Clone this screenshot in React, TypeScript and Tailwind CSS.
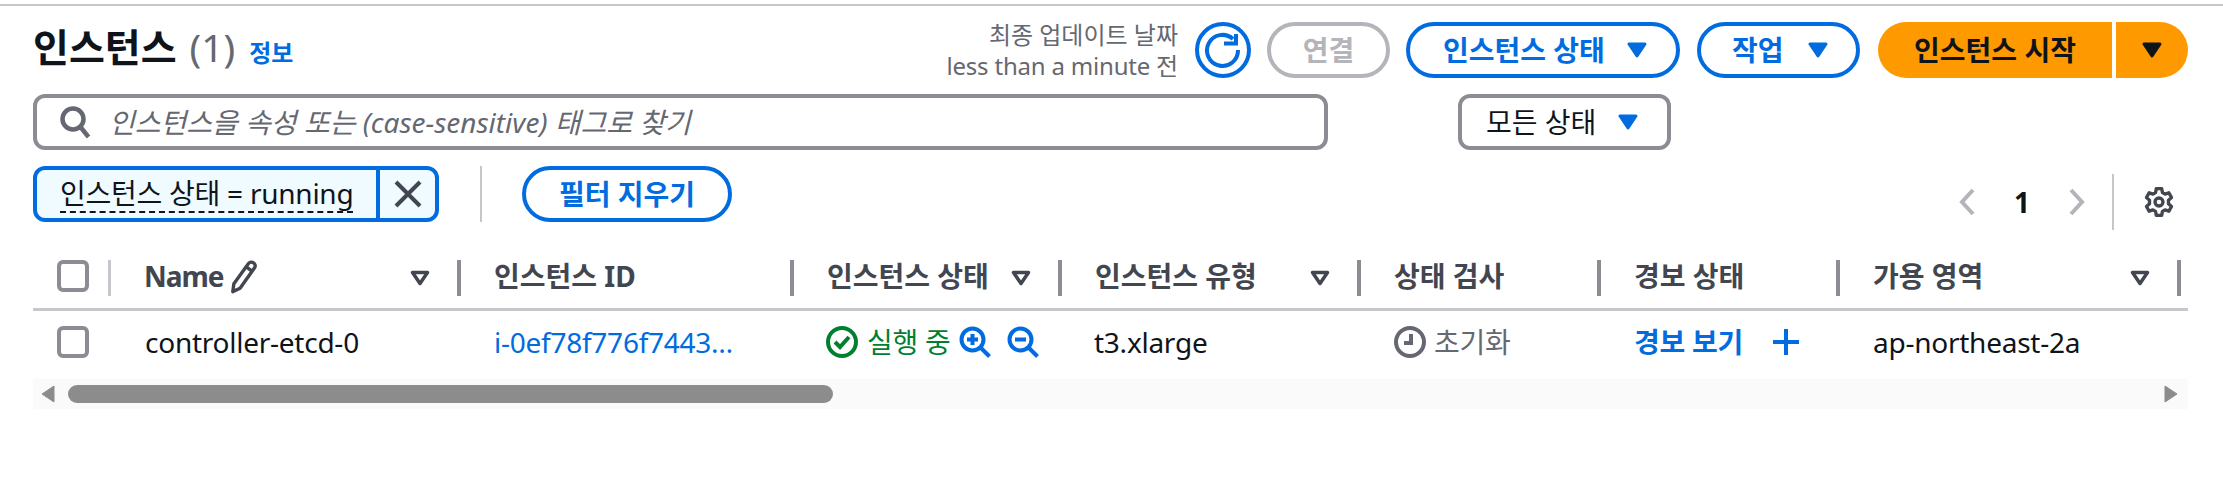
import type { ReactNode } from 'react';

const columns = 'grid grid-cols-[78px_350px_333px_268px_299px_240px_239px_341px_7px]';

function Caret({ color = 'fill-[#006ce0] stroke-[#006ce0]' }: { color?: string }) {
  return (
    <svg width="20" height="16" viewBox="0 0 20 16" className={`shrink-0 ${color}`}>
      <path d="M2 2h16l-8 12z" strokeWidth="3" strokeLinejoin="round" />
    </svg>
  );
}

function SortIcon() {
  return (
    <svg width="20" height="16" viewBox="0 0 20 16" fill="none" stroke="#424650" strokeWidth="3.5" strokeLinejoin="round" className="shrink-0">
      <path d="M2.5 2.5h15L10 13.5z" />
    </svg>
  );
}

function Checkbox() {
  return <div className="w-[32px] h-[32px] rounded-[6px] border-[4px] border-[#8c8c94] bg-white" />;
}

function HeaderCell({ label, sort, pencil }: { label?: string; sort?: boolean; pencil?: boolean }) {
  return (
    <div className="flex items-center h-[36px] pl-[33px]">
      <span className={`mb-[4px] text-[28px] font-bold text-[#424650] whitespace-nowrap ${pencil ? 'tracking-[-1px]' : ''}`}>{label}</span>
      {pencil && (
        <svg width="32" height="36" viewBox="0 0 28 32" fill="none" stroke="#424650" strokeWidth="3" strokeLinejoin="round" className="ml-[4px] mb-[2px]">
          <path d="M5 22 18 4c1-1.400 3-1.600 4.500-.6s1.900 3 .9 4.400L10.500 26 4 29z" />
          <path d="m16 7 6 4.500" />
        </svg>
      )}
      <div className="ml-auto flex items-center">
        {sort && <SortIcon />}
        <div className="ml-[27px] h-[36px] w-[4px] bg-[#8c8c94]" />
      </div>
    </div>
  );
}

function ZoomIcon({ minus }: { minus?: boolean }) {
  return (
    <svg width="32" height="32" viewBox="0 0 32 32" fill="none" stroke="#006ce0" className="shrink-0">
      <circle cx="13.500" cy="13.500" r="11" strokeWidth="4" />
      <path d="m21.500 21.500 9 9" strokeWidth="4" />
      <path d={minus ? 'M8 13.500h11' : 'M8 13.500h11M13.500 8v11'} strokeWidth="4" />
    </svg>
  );
}

function Pill({ children, className }: { children: ReactNode; className: string }) {
  return (
    <button className={`flex items-center h-[56px] rounded-[28px] border-[4px] bg-white text-[28px] font-bold whitespace-nowrap ${className}`}>
      {children}
    </button>
  );
}

export default function App() {
  return (
    <div className="w-[2223px] h-[482px] bg-white overflow-hidden text-[#0f141a] font-['Noto_Sans','Noto_Sans_CJK_KR',sans-serif]">
      <div className="mt-[4px] h-[2px] bg-[#c6c6cd]" />

      <div className="pl-[33px] pr-[35px] pt-[16px]">
        {/* Header */}
        <div className="flex items-center justify-between h-[56px]">
          <div className="flex items-baseline pb-[6px]">
            <h1 className="text-[39px] font-bold">인스턴스</h1>
            <span className="ml-[13px] text-[39px] text-[#656871]">(1)</span>
            <a className="ml-[14px] text-[24px] font-bold text-[#006ce0]">정보</a>
          </div>
          <div className="flex items-center">
            <div className="text-right text-[24px] leading-[31px] text-[#656871]">
              <div>최종 업데이트 날짜</div>
              <div className="tracking-[-0.2px]">less than a minute 전</div>
            </div>
            <svg width="56" height="56" viewBox="0 0 56 56" fill="none" stroke="#006ce0" className="ml-[17px]">
              <circle cx="28" cy="28" r="26" strokeWidth="4" />
              <path d="M38 17a15.500 15.500 0 1 0 5 11" strokeWidth="4" />
              <path d="M29 21.500h12V12" strokeWidth="4" />
            </svg>
            <Pill className="ml-[16px] w-[123px] justify-center border-[#b4b4bb] text-[#b4b4bb]">연결</Pill>
            <Pill className="ml-[16px] w-[274px] pl-[33px] border-[#006ce0] text-[#006ce0]">
              인스턴스 상태
              <span className="ml-[22px]"><Caret /></span>
            </Pill>
            <Pill className="ml-[17px] w-[163px] pl-[31px] border-[#006ce0] text-[#006ce0]">
              작업
              <span className="ml-[24px]"><Caret /></span>
            </Pill>
            <div className="ml-[18px] flex h-[56px] gap-[4px]">
              <button className="w-[234px] rounded-l-[28px] bg-[#ff9900] text-[28px] font-bold whitespace-nowrap">인스턴스 시작</button>
              <button className="flex w-[72px] items-center justify-center rounded-r-[28px] bg-[#ff9900]">
                <Caret color="fill-[#0f141a] stroke-[#0f141a]" />
              </button>
            </div>
          </div>
        </div>

        {/* Search */}
        <div className="mt-[16px] flex items-center">
          <div className="flex items-center w-[1295px] h-[56px] rounded-[12px] border-[4px] border-[#8c8c94] pl-[22px]">
            <svg width="32" height="34" viewBox="0 0 32 34" fill="none" stroke="#656871" strokeWidth="4.500">
              <circle cx="14" cy="14" r="10.500" />
              <path d="m21.500 22 8 10" />
            </svg>
            <span className="ml-[18px] text-[28px] italic text-[#656871] whitespace-nowrap">인스턴스을 속성 또는 (case-sensitive) 태그로 찾기</span>
          </div>
          <div className="ml-[130px] flex items-center w-[213px] h-[56px] rounded-[12px] border-[4px] border-[#8c8c94] pl-[24px] text-[28px] whitespace-nowrap">
            모든 상태
            <span className="ml-[22px]"><Caret /></span>
          </div>
        </div>

        {/* Active filter */}
        <div className="mt-[16px] flex items-start">
          <div className="flex h-[56px] w-[406px] rounded-[12px] border-[4px] border-[#006ce0] bg-[#f0fbff]">
            <div className="flex-1 flex items-center pl-[23px]">
              <span className="text-[28px] leading-[36px] tracking-[-0.25px] whitespace-nowrap border-b-[2px] border-dashed border-[#0f141a]">인스턴스 상태 = running</span>
            </div>
            <div className="flex w-[59px] items-center justify-center border-l-[4px] border-[#006ce0]">
              <svg width="28" height="28" viewBox="0 0 28 28" stroke="#424650" strokeWidth="4">
                <path d="M2 2l24 24M26 2 2 26" />
              </svg>
            </div>
          </div>
          <div className="ml-[41px] h-[56px] w-[2px] bg-[#c6c6cd]" />
          <Pill className="ml-[40px] w-[210px] justify-center border-[#006ce0] text-[#006ce0]">필터 지우기</Pill>
          <div className="ml-auto mt-[8px] flex items-center h-[56px] pr-[13px]">
            <svg width="18" height="28" viewBox="0 0 18 28" fill="none" stroke="#b4b4bb" strokeWidth="4">
              <path d="M15 2 4 14l11 12" />
            </svg>
            <span className="mx-[38px] text-[28px] font-bold">1</span>
            <svg width="18" height="28" viewBox="0 0 18 28" fill="none" stroke="#b4b4bb" strokeWidth="4">
              <path d="m3 2 11 12L3 26" />
            </svg>
            <div className="ml-[26px] h-[56px] w-[2px] bg-[#c6c6cd]" />
            <svg width="32" height="32" viewBox="0 0 24 24" fill="none" stroke="#424650" strokeWidth="2.500" strokeLinejoin="round" className="ml-[29px]">
              <circle cx="12" cy="12" r="3" />
              <path d="M10 2h4l.6 3 1.900 1.100 2.900-1 2 3.500-2.300 2v2.800l2.300 2-2 3.500-2.900-1-1.900 1.100-.6 3h-4l-.6-3-1.900-1.100-2.900 1-2-3.500 2.300-2v-2.800l-2.300-2 2-3.500 2.900 1 1.900-1.100z" />
            </svg>
          </div>
        </div>

        {/* Table header */}
        <div className={`${columns} mt-[30px] pb-[12px] border-b-[3px] border-[#c6c6cd]`}>
          <div className="flex items-center h-[36px]">
            <div className="ml-[24px] mb-[4px]"><Checkbox /></div>
            <div className="ml-auto h-[36px] w-[3px] bg-[#c6c6cd]" />
          </div>
          <HeaderCell label="Name" pencil sort />
          <HeaderCell label="인스턴스 ID" />
          <HeaderCell label="인스턴스 상태" sort />
          <HeaderCell label="인스턴스 유형" sort />
          <HeaderCell label="상태 검사" />
          <HeaderCell label="경보 상태" />
          <HeaderCell label="가용 영역" sort />
        </div>

        {/* Row */}
        <div className={`${columns} h-[68px] pb-[6px] items-center text-[28px] tracking-[-0.25px] whitespace-nowrap`}>
          <div className="ml-[24px]"><Checkbox /></div>
          <div className="pl-[34px]">controller-etcd-0</div>
          <div className="pl-[33px] pr-[44px] truncate text-[#006ce0]">i-0ef78f776f7443d8a</div>
          <div className="pl-[32px] flex items-center text-[#00802f]">
            <svg width="32" height="32" viewBox="0 0 32 32" fill="none" stroke="#00802f" strokeWidth="4" className="shrink-0">
              <circle cx="16" cy="16" r="14" />
              <path d="m9 16 5 5 9-10" />
            </svg>
            <span className="ml-[9px]">실행 중</span>
            <span className="ml-[8px]"><ZoomIcon /></span>
            <span className="ml-[16px]"><ZoomIcon minus /></span>
          </div>
          <div className="pl-[32px]">t3.xlarge</div>
          <div className="pl-[33px] flex items-center text-[#656871]">
            <svg width="32" height="32" viewBox="0 0 32 32" fill="none" stroke="#656871" strokeWidth="4" className="shrink-0">
              <circle cx="16" cy="16" r="14" />
              <path d="M17 8v9h-7" />
            </svg>
            <span className="ml-[8px]">초기화</span>
          </div>
          <div className="pl-[33px] flex items-center text-[#006ce0] font-bold">
            경보 보기
            <svg width="26" height="26" viewBox="0 0 26 26" stroke="#006ce0" strokeWidth="4" className="ml-[30px]">
              <path d="M0 13h26M13 0v26" />
            </svg>
          </div>
          <div className="pl-[33px]">ap-northeast-2a</div>
        </div>

        {/* Horizontal scrollbar */}
        <div className="flex items-center h-[30px] bg-[#fafafa]">
          <svg width="14" height="18" viewBox="0 0 14 18" fill="#8c8c8c" className="ml-[8px]">
            <path d="M13 1v16L1 9z" stroke="#8c8c8c" strokeLinejoin="round" />
          </svg>
          <div className="ml-[13px] h-[18px] w-[765px] rounded-[9px] bg-[#8c8c8c]" />
          <svg width="14" height="18" viewBox="0 0 14 18" fill="#8c8c8c" className="ml-auto mr-[10px]">
            <path d="M1 1v16l12-8z" stroke="#8c8c8c" strokeLinejoin="round" />
          </svg>
        </div>
      </div>
    </div>
  );
}
